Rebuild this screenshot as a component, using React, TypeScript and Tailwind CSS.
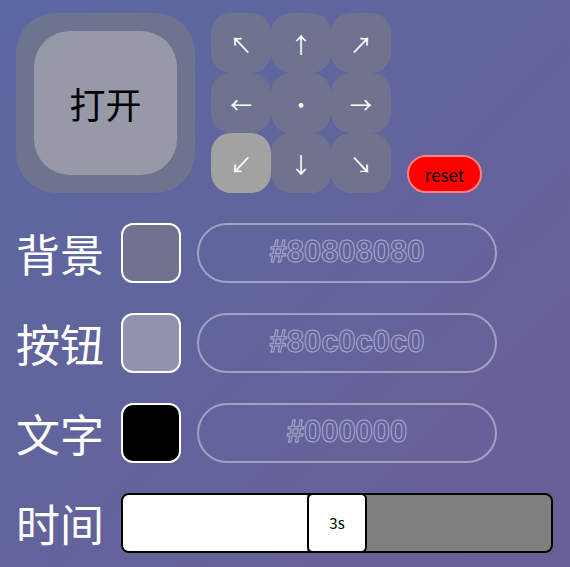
import React, { useState } from 'react';

const arrows = ['↖', '↑', '↗', '←', '·', '→', '↙', '↓', '↘'];

const rows = [
    { label: '背景', color: '#80808080', swatch: 'bg-[#80808080]' },
    { label: '按钮', color: '#80c0c0c0', swatch: 'bg-[#c0c0c080]' },
    { label: '文字', color: '#000000', swatch: 'bg-black' },
];

const App: React.FC = () => {
    const [dir, setDir] = useState(6);

    return (
        <div
            className="min-h-[567px] w-full bg-linear-135 from-[#5a68a1] to-[#6a5f97] px-4 pt-[13px] pb-4 text-white"
            style={{ fontFamily: '"Noto Sans CJK SC", "Noto Sans", sans-serif' }}
        >
            <div className="flex items-end gap-4">
                <div className="w-[179px] h-[180px] rounded-[40px] bg-[#80808080] p-[18px]">
                    <button className="w-full h-full rounded-[36px] bg-[#c0c0c080] text-black text-[36px] flex items-center justify-center">
                        打开
                    </button>
                </div>
                <div className="grid grid-cols-3 w-[180px]">
                    {arrows.map((a, i) => (
                        <button
                            key={i}
                            onClick={() => setDir(i)}
                            className={`h-[60px] rounded-[20px] text-[22px] flex items-center justify-center text-white ${i === dir ? 'bg-[#a2a2a2]' : 'bg-[#80808080]'}`}
                        >
                            {a}
                        </button>
                    ))}
                </div>
                <button className="w-[75px] h-[38px] rounded-full bg-[#ff0000] border-2 border-[#ff8080] text-black text-[17px] leading-none">
                    reset
                </button>
            </div>

            <div className="flex flex-col gap-[30px] mt-[30px]">
                {rows.map(r => (
                    <div key={r.label} className="flex items-center gap-4 h-[60px]">
                        <div className="w-[89px] text-[44px] leading-none whitespace-nowrap">{r.label}</div>
                        <div className={`w-[60px] h-[60px] rounded-xl border-2 border-white ${r.swatch}`}></div>
                        <div className="w-[300px] h-[60px] rounded-full border-2 border-[#ffffff66] flex items-center justify-center pb-1">
                            <span
                                className="text-[31px] font-bold leading-none text-transparent [-webkit-text-stroke:1px_#a9acd0]"
                                style={{ fontFamily: '"Liberation Sans", Arial, sans-serif' }}
                            >
                                {r.color}
                            </span>
                        </div>
                    </div>
                ))}

                <div className="flex items-center gap-4 h-[60px]">
                    <div className="w-[89px] text-[44px] leading-none whitespace-nowrap">时间</div>
                    <div className="flex h-[60px] w-[432px] rounded-lg border-2 border-black overflow-hidden bg-[#808080]">
                        <div className="w-[184px] bg-white"></div>
                        <div className="w-[60px] bg-white border-2 border-black -my-[2px] h-[60px] rounded-md flex items-center justify-center text-black text-[15px]">
                            3s
                        </div>
                    </div>
                </div>
            </div>
        </div>
    );
};

export default App;
